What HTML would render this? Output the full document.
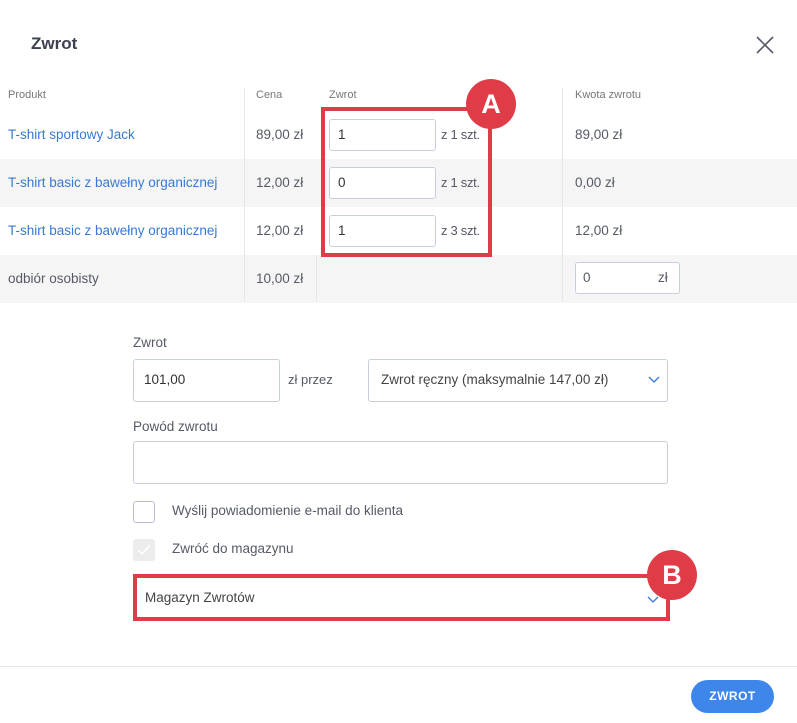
<!DOCTYPE html>
<html><head><meta charset="utf-8"><style>
*{box-sizing:border-box;margin:0;padding:0}
body{width:797px;height:723px;background:#fff;font-family:"Liberation Sans",sans-serif;color:#555a66;position:relative;overflow:hidden;font-size:13.5px}
.a{position:absolute}
.row{position:absolute;left:0;width:797px;height:48px}
.g{background:#f5f5f5}
.lnk{color:#3a78d4}
.inp{position:absolute;border:1px solid #c8cee0;border-radius:3px;background:#fff}
.t{position:absolute;white-space:nowrap}
.vl{position:absolute;width:1px;background:#e6e6e6}
.circ{position:absolute;width:50px;height:50px;border-radius:50%;background:#e03c47;color:#fff;font-weight:bold;font-size:27px;text-align:center;line-height:50px}
.s{font-size:13px;letter-spacing:-0.3px}
</style></head><body>
<div class="t" style="left:31px;top:34px;font-size:17px;font-weight:bold;color:#3c4150">Zwrot</div>
<svg class="a" style="left:756px;top:36px" width="18" height="18"><path d="M1 1L17 17M17 1L1 17" stroke="#555a66" stroke-width="1.6"/></svg>
<div class="t" style="left:8px;top:89px;font-size:11px;color:#777">Produkt</div>
<div class="t" style="left:256px;top:89px;font-size:11px;color:#777">Cena</div>
<div class="t" style="left:329px;top:89px;font-size:11px;color:#777">Zwrot</div>
<div class="t" style="left:575px;top:89px;font-size:11px;color:#777">Kwota zwrotu</div>
<div class="row" style="top:111px"></div>
<div class="row g" style="top:159px"></div>
<div class="row" style="top:207px"></div>
<div class="row g" style="top:255px"></div>
<div class="vl" style="left:244px;top:88px;height:214px"></div>
<div class="vl" style="left:562px;top:88px;height:214px"></div>
<div class="vl" style="left:316px;top:255px;height:47px"></div>
<div class="t lnk" style="left:8px;top:127px">T-shirt sportowy Jack</div>
<div class="t lnk" style="left:8px;top:175px">T-shirt basic z bawełny organicznej</div>
<div class="t lnk" style="left:8px;top:223px">T-shirt basic z bawełny organicznej</div>
<div class="t" style="left:8px;top:271px">odbiór osobisty</div>
<div class="t" style="left:256px;top:127px">89,00 zł</div>
<div class="t" style="left:256px;top:175px">12,00 zł</div>
<div class="t" style="left:256px;top:223px">12,00 zł</div>
<div class="t" style="left:256px;top:271px">10,00 zł</div>
<div class="inp" style="left:329px;top:119px;width:107px;height:32px"></div><div class="t" style="left:338px;top:127px;color:#333">1</div><div class="t s" style="left:441px;top:127px">z 1 szt.</div>
<div class="inp" style="left:329px;top:167px;width:107px;height:32px"></div><div class="t" style="left:338px;top:175px;color:#333">0</div><div class="t s" style="left:441px;top:175px">z 1 szt.</div>
<div class="inp" style="left:329px;top:215px;width:107px;height:32px"></div><div class="t" style="left:338px;top:223px;color:#333">1</div><div class="t s" style="left:441px;top:223px">z 3 szt.</div>
<div class="t" style="left:575px;top:127px">89,00 zł</div>
<div class="t" style="left:575px;top:175px">0,00 zł</div>
<div class="t" style="left:575px;top:223px">12,00 zł</div>
<div class="inp" style="left:575px;top:262px;width:105px;height:32px"></div><div class="t" style="left:583px;top:270px">0</div><div class="t" style="left:658px;top:270px">zł</div>
<div class="a" style="left:321px;top:107px;width:171px;height:150px;border:4px solid #e03c47"></div>
<div class="circ" style="left:466px;top:79px">A</div>
<div class="t" style="left:133px;top:335px">Zwrot</div>
<div class="inp" style="left:133px;top:359px;width:147px;height:43px"></div><div class="t" style="left:144px;top:372px;color:#333">101,00</div>
<div class="t" style="left:288px;top:372px;font-size:13px">zł przez</div>
<div class="inp" style="left:368px;top:359px;width:300px;height:43px"></div><div class="t" style="left:381px;top:372px;color:#444">Zwrot ręczny (maksymalnie 147,00 zł)</div>
<svg class="a" style="left:648px;top:376px" width="12" height="8"><path d="M1 1L6 6L11 1" stroke="#3a78d4" fill="none" stroke-width="1.3"/></svg>
<div class="t" style="left:133px;top:419px">Powód zwrotu</div>
<div class="inp" style="left:133px;top:441px;width:535px;height:43px"></div>
<div class="inp" style="left:133px;top:501px;width:22px;height:22px;border-color:#b8bfd2"></div>
<div class="t" style="left:172px;top:503px">Wyślij powiadomienie e-mail do klienta</div>
<div class="a" style="left:133px;top:539px;width:22px;height:22px;background:#ececec;border-radius:3px"></div>
<svg class="a" style="left:136px;top:543px" width="16" height="14"><path d="M2 7L6 11L14 2" stroke="#fff" fill="none" stroke-width="1.5"/></svg>
<div class="t" style="left:172px;top:541px">Zwróć do magazynu</div>
<div class="a" style="left:133px;top:574px;width:537px;height:47px;border:4px solid #e03c47"></div>
<div class="t" style="left:145px;top:590px;color:#444">Magazyn Zwrotów</div>
<svg class="a" style="left:647px;top:596px" width="12" height="8"><path d="M1 1L6 6L11 1" stroke="#3a78d4" fill="none" stroke-width="1.3"/></svg>
<div class="circ" style="left:647px;top:550px">B</div>
<div class="a" style="left:0;top:666px;width:797px;height:1px;background:#e6e6e6"></div>
<div class="a" style="left:691px;top:680px;width:83px;height:33px;border-radius:17px;background:#3e86ea;color:#fff;font-weight:bold;font-size:12px;text-align:center;line-height:33px;letter-spacing:.5px">ZWROT</div>
</body></html>
